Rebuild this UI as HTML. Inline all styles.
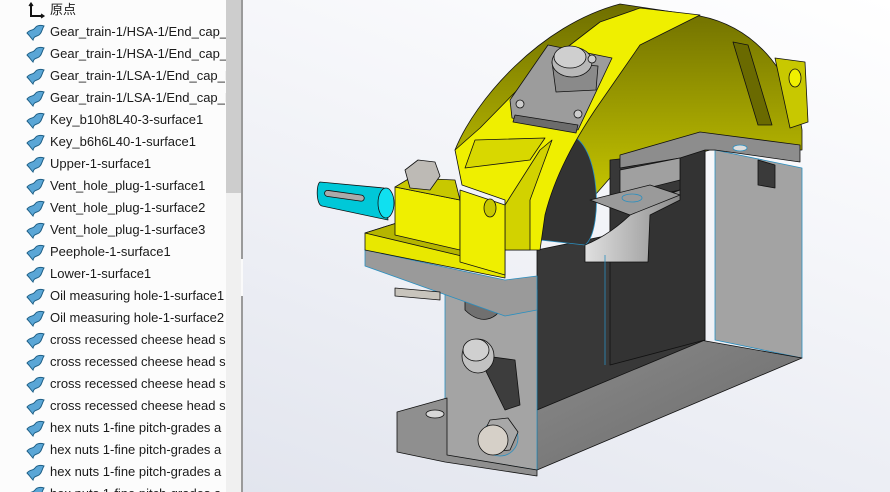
<!DOCTYPE html>
<html><head><meta charset="utf-8"><style>
*{margin:0;padding:0;box-sizing:border-box}
body{width:890px;height:492px;overflow:hidden;position:relative;background:#fff;font-family:"Liberation Sans","Noto Sans CJK SC",sans-serif}
#side{position:absolute;left:0;top:0;width:226px;height:492px;background:#fcfcfc;overflow:hidden}
.row{position:absolute;left:0;height:22px;white-space:nowrap;font-size:13px;color:#1a1a1a;line-height:22px}
.row span{position:absolute;left:50px;top:0}
.row svg{position:absolute;left:26px;top:3px}
#sb{position:absolute;left:226px;top:0;width:15px;height:492px;background:#f0f0f0}
#th{position:absolute;left:226px;top:0;width:15px;height:193px;background:#cdcdcd}
#ln{position:absolute;left:241px;top:0;width:2px;height:492px;background:#9a9a9a}
#tab{position:absolute;left:241px;top:258px;width:9px;height:39px;background:#fafafa;border:1px solid #9a9a9a;border-left:none}
#tab i{position:absolute;left:2px;top:15px;width:5px;height:5px;border-radius:50%;background:#b0b0b0}
#gfx{position:absolute;left:243px;top:0;width:647px;height:492px;background:linear-gradient(200deg,#ffffff 0%,#f4f5f9 40%,#e2e5ee 100%)}
</style></head><body>
<div id="side">
<div class="row" style="top:-1px"><svg width="20" height="18" viewBox="0 0 20 18"><path d="M5 2 V14 H17" stroke="#111" stroke-width="2" fill="none"/><path d="M3 4 L5 1 L7 4 M15 12 L18 14 L15 16" stroke="#111" stroke-width="1.2" fill="none"/></svg><span>原点</span></div>
<div class="row" style="top:21px"><svg width="20" height="18" viewBox="0 0 20 18"><path d="M1 9 C4 5 7 7 9 4 C11 1 15 1 18 2 C16 5 16 8 14 10 C12 13 8 11 7 16 C5 14 3 11 1 9 Z" fill="#5aa6d6" stroke="#1e5f86" stroke-width="1"/></svg><span>Gear_train-1/HSA-1/End_cap_H</span></div>
<div class="row" style="top:43px"><svg width="20" height="18" viewBox="0 0 20 18"><path d="M1 9 C4 5 7 7 9 4 C11 1 15 1 18 2 C16 5 16 8 14 10 C12 13 8 11 7 16 C5 14 3 11 1 9 Z" fill="#5aa6d6" stroke="#1e5f86" stroke-width="1"/></svg><span>Gear_train-1/HSA-1/End_cap_H</span></div>
<div class="row" style="top:65px"><svg width="20" height="18" viewBox="0 0 20 18"><path d="M1 9 C4 5 7 7 9 4 C11 1 15 1 18 2 C16 5 16 8 14 10 C12 13 8 11 7 16 C5 14 3 11 1 9 Z" fill="#5aa6d6" stroke="#1e5f86" stroke-width="1"/></svg><span>Gear_train-1/LSA-1/End_cap_L</span></div>
<div class="row" style="top:87px"><svg width="20" height="18" viewBox="0 0 20 18"><path d="M1 9 C4 5 7 7 9 4 C11 1 15 1 18 2 C16 5 16 8 14 10 C12 13 8 11 7 16 C5 14 3 11 1 9 Z" fill="#5aa6d6" stroke="#1e5f86" stroke-width="1"/></svg><span>Gear_train-1/LSA-1/End_cap_L</span></div>
<div class="row" style="top:109px"><svg width="20" height="18" viewBox="0 0 20 18"><path d="M1 9 C4 5 7 7 9 4 C11 1 15 1 18 2 C16 5 16 8 14 10 C12 13 8 11 7 16 C5 14 3 11 1 9 Z" fill="#5aa6d6" stroke="#1e5f86" stroke-width="1"/></svg><span>Key_b10h8L40-3-surface1</span></div>
<div class="row" style="top:131px"><svg width="20" height="18" viewBox="0 0 20 18"><path d="M1 9 C4 5 7 7 9 4 C11 1 15 1 18 2 C16 5 16 8 14 10 C12 13 8 11 7 16 C5 14 3 11 1 9 Z" fill="#5aa6d6" stroke="#1e5f86" stroke-width="1"/></svg><span>Key_b6h6L40-1-surface1</span></div>
<div class="row" style="top:153px"><svg width="20" height="18" viewBox="0 0 20 18"><path d="M1 9 C4 5 7 7 9 4 C11 1 15 1 18 2 C16 5 16 8 14 10 C12 13 8 11 7 16 C5 14 3 11 1 9 Z" fill="#5aa6d6" stroke="#1e5f86" stroke-width="1"/></svg><span>Upper-1-surface1</span></div>
<div class="row" style="top:175px"><svg width="20" height="18" viewBox="0 0 20 18"><path d="M1 9 C4 5 7 7 9 4 C11 1 15 1 18 2 C16 5 16 8 14 10 C12 13 8 11 7 16 C5 14 3 11 1 9 Z" fill="#5aa6d6" stroke="#1e5f86" stroke-width="1"/></svg><span>Vent_hole_plug-1-surface1</span></div>
<div class="row" style="top:197px"><svg width="20" height="18" viewBox="0 0 20 18"><path d="M1 9 C4 5 7 7 9 4 C11 1 15 1 18 2 C16 5 16 8 14 10 C12 13 8 11 7 16 C5 14 3 11 1 9 Z" fill="#5aa6d6" stroke="#1e5f86" stroke-width="1"/></svg><span>Vent_hole_plug-1-surface2</span></div>
<div class="row" style="top:219px"><svg width="20" height="18" viewBox="0 0 20 18"><path d="M1 9 C4 5 7 7 9 4 C11 1 15 1 18 2 C16 5 16 8 14 10 C12 13 8 11 7 16 C5 14 3 11 1 9 Z" fill="#5aa6d6" stroke="#1e5f86" stroke-width="1"/></svg><span>Vent_hole_plug-1-surface3</span></div>
<div class="row" style="top:241px"><svg width="20" height="18" viewBox="0 0 20 18"><path d="M1 9 C4 5 7 7 9 4 C11 1 15 1 18 2 C16 5 16 8 14 10 C12 13 8 11 7 16 C5 14 3 11 1 9 Z" fill="#5aa6d6" stroke="#1e5f86" stroke-width="1"/></svg><span>Peephole-1-surface1</span></div>
<div class="row" style="top:263px"><svg width="20" height="18" viewBox="0 0 20 18"><path d="M1 9 C4 5 7 7 9 4 C11 1 15 1 18 2 C16 5 16 8 14 10 C12 13 8 11 7 16 C5 14 3 11 1 9 Z" fill="#5aa6d6" stroke="#1e5f86" stroke-width="1"/></svg><span>Lower-1-surface1</span></div>
<div class="row" style="top:285px"><svg width="20" height="18" viewBox="0 0 20 18"><path d="M1 9 C4 5 7 7 9 4 C11 1 15 1 18 2 C16 5 16 8 14 10 C12 13 8 11 7 16 C5 14 3 11 1 9 Z" fill="#5aa6d6" stroke="#1e5f86" stroke-width="1"/></svg><span>Oil measuring hole-1-surface1</span></div>
<div class="row" style="top:307px"><svg width="20" height="18" viewBox="0 0 20 18"><path d="M1 9 C4 5 7 7 9 4 C11 1 15 1 18 2 C16 5 16 8 14 10 C12 13 8 11 7 16 C5 14 3 11 1 9 Z" fill="#5aa6d6" stroke="#1e5f86" stroke-width="1"/></svg><span>Oil measuring hole-1-surface2</span></div>
<div class="row" style="top:329px"><svg width="20" height="18" viewBox="0 0 20 18"><path d="M1 9 C4 5 7 7 9 4 C11 1 15 1 18 2 C16 5 16 8 14 10 C12 13 8 11 7 16 C5 14 3 11 1 9 Z" fill="#5aa6d6" stroke="#1e5f86" stroke-width="1"/></svg><span>cross recessed cheese head s</span></div>
<div class="row" style="top:351px"><svg width="20" height="18" viewBox="0 0 20 18"><path d="M1 9 C4 5 7 7 9 4 C11 1 15 1 18 2 C16 5 16 8 14 10 C12 13 8 11 7 16 C5 14 3 11 1 9 Z" fill="#5aa6d6" stroke="#1e5f86" stroke-width="1"/></svg><span>cross recessed cheese head s</span></div>
<div class="row" style="top:373px"><svg width="20" height="18" viewBox="0 0 20 18"><path d="M1 9 C4 5 7 7 9 4 C11 1 15 1 18 2 C16 5 16 8 14 10 C12 13 8 11 7 16 C5 14 3 11 1 9 Z" fill="#5aa6d6" stroke="#1e5f86" stroke-width="1"/></svg><span>cross recessed cheese head s</span></div>
<div class="row" style="top:395px"><svg width="20" height="18" viewBox="0 0 20 18"><path d="M1 9 C4 5 7 7 9 4 C11 1 15 1 18 2 C16 5 16 8 14 10 C12 13 8 11 7 16 C5 14 3 11 1 9 Z" fill="#5aa6d6" stroke="#1e5f86" stroke-width="1"/></svg><span>cross recessed cheese head s</span></div>
<div class="row" style="top:417px"><svg width="20" height="18" viewBox="0 0 20 18"><path d="M1 9 C4 5 7 7 9 4 C11 1 15 1 18 2 C16 5 16 8 14 10 C12 13 8 11 7 16 C5 14 3 11 1 9 Z" fill="#5aa6d6" stroke="#1e5f86" stroke-width="1"/></svg><span>hex nuts 1-fine pitch-grades a</span></div>
<div class="row" style="top:439px"><svg width="20" height="18" viewBox="0 0 20 18"><path d="M1 9 C4 5 7 7 9 4 C11 1 15 1 18 2 C16 5 16 8 14 10 C12 13 8 11 7 16 C5 14 3 11 1 9 Z" fill="#5aa6d6" stroke="#1e5f86" stroke-width="1"/></svg><span>hex nuts 1-fine pitch-grades a</span></div>
<div class="row" style="top:461px"><svg width="20" height="18" viewBox="0 0 20 18"><path d="M1 9 C4 5 7 7 9 4 C11 1 15 1 18 2 C16 5 16 8 14 10 C12 13 8 11 7 16 C5 14 3 11 1 9 Z" fill="#5aa6d6" stroke="#1e5f86" stroke-width="1"/></svg><span>hex nuts 1-fine pitch-grades a</span></div>
<div class="row" style="top:483px"><svg width="20" height="18" viewBox="0 0 20 18"><path d="M1 9 C4 5 7 7 9 4 C11 1 15 1 18 2 C16 5 16 8 14 10 C12 13 8 11 7 16 C5 14 3 11 1 9 Z" fill="#5aa6d6" stroke="#1e5f86" stroke-width="1"/></svg><span>hex nuts 1-fine pitch-grades a</span></div>
</div>
<div id="sb"></div><div id="th"></div><div id="ln"></div><div id="tab"><i></i></div>
<div id="gfx"></div>
<svg style="position:absolute;left:0;top:0" width="890" height="492" viewBox="0 0 890 492">
<defs>
<linearGradient id="ol" x1="0" y1="0" x2="0" y2="1"><stop offset="0" stop-color="#6e6e00"/><stop offset="1" stop-color="#d6d600"/></linearGradient>
<linearGradient id="fl" x1="0" y1="0" x2="1" y2="1"><stop offset="0" stop-color="#8a8a8a"/><stop offset="1" stop-color="#6a6a6a"/></linearGradient>
<linearGradient id="sd" x1="0" y1="0" x2="1" y2="0"><stop offset="0" stop-color="#e0e0e0"/><stop offset="1" stop-color="#8a8a8a"/></linearGradient>
</defs>
<g stroke="#111" stroke-width="0.8" stroke-linejoin="round">
<path d="M455,150 C475,100 540,25 620,4 L700,16 C760,28 795,80 802,130 L802,150 L710,150 L610,178 L560,235 Z" fill="url(#ol)"/>
<path d="M775,58 L805,62 L808,122 L790,128 Z" fill="#c8c800"/>
<ellipse cx="795" cy="78" rx="6" ry="9" fill="#f0f000"/>
<path d="M733,42 L748,45 L772,125 L758,125 Z" fill="#6a6a00"/>
<path d="M715,150 L802,168 L802,358 L715,340 Z" fill="#a3a3a3" stroke="#2a8fc0"/>
<path d="M537,402 L700,340 L802,358 L537,470 Z" fill="url(#fl)"/>
<path d="M537,250 L610,235 L610,160 L705,150 L705,340 L537,410 Z" fill="#383838"/>
<path d="M610,205 L680,190 L680,155 L705,150 L705,340 L610,365 Z" fill="#333"/>
<path d="M620,155 L700,132 L800,145 L800,162 L715,150 L705,150 L680,158 L620,168 Z" fill="#8d8d8d"/>
<path d="M620,170 L680,158 L680,180 L620,195 Z" fill="#a0a0a0"/>
<ellipse cx="740" cy="148" rx="7" ry="3" fill="#ddd" stroke="#2a8fc0"/>
<path d="M758,160 L775,165 L775,188 L758,185 Z" fill="#3a3a3a"/>
<!-- bearing -->
<path d="M560,135 C600,125 605,230 585,245 L540,240 Z" fill="#333" stroke="#2a8fc0"/>
<path d="M585,245 C610,235 628,218 640,205 L680,190 L680,200 L650,215 L648,262 L585,262 Z" fill="url(#sd)"/>
<path d="M590,200 L650,185 L680,195 L630,215 Z" fill="#9a9a9a"/>
<ellipse cx="632" cy="198" rx="10" ry="4" fill="none" stroke="#2a8fc0"/>
<path d="M605,255 L605,365" stroke="#2a8fc0"/>
<!-- left column -->
<path d="M445,295 L537,290 L537,470 L445,455 Z" fill="#a4a4a4" stroke="#2a8fc0"/>
<path d="M397,412 L447,398 L447,455 L537,470 L537,476 L445,462 L397,452 Z" fill="#8f8f8f"/>
<ellipse cx="435" cy="414" rx="9" ry="4" fill="#d8d8d8"/>
<path d="M465,290 L465,310 C480,325 498,322 505,300 Z" fill="#707070"/>
<path d="M478,355 L515,360 L520,405 L505,410 Z" fill="#3d3d3d"/>
<ellipse cx="478" cy="356" rx="16" ry="17" fill="#c2c2c2"/>
<ellipse cx="476" cy="350" rx="13" ry="11" fill="#d0d0d0"/>
<circle cx="500" cy="438" r="18" fill="#9a9a9a" stroke="#2a8fc0"/>
<path d="M482,436 L490,420 L508,418 L518,432 L510,450 L490,452 Z" fill="#a8a8a8"/>
<circle cx="493" cy="440" r="15" fill="#d6d0c8"/>
<path d="M365,250 L505,280 L537,276 L537,310 L505,316 L365,266 Z" fill="#9a9a9a" stroke="#2a8fc0"/>
<path d="M395,288 L440,292 L440,300 L395,296 Z" fill="#c8c4bc"/>
<path d="M365,233 L400,222 L505,250 L505,278 L365,250 Z" fill="#e8e800"/>
<path d="M365,233 L400,222 L505,250 L470,258 Z" fill="#b5b500"/>
<ellipse cx="440" cy="236" rx="6" ry="4" fill="#999"/>
<path d="M320,182 L384,188 L388,220 L322,206 C316,205 316,184 320,182 Z" fill="#00c8d8"/>
<ellipse cx="386" cy="203" rx="8" ry="15" fill="#10e0f0"/>
<rect x="325" y="190" width="40" height="6" rx="3" transform="rotate(8 325 190)" fill="#aaa"/>
<path d="M395,187 L460,200 L460,250 L395,235 Z" fill="#efef00"/>
<path d="M395,187 L410,178 L455,180 L460,200 Z" fill="#c8c800"/>
<path d="M405,170 L418,160 L435,162 L440,176 L430,190 L410,188 Z" fill="#bdbab5"/>
<!-- arm bright -->
<path d="M455,150 L480,128 L535,72 L600,22 L640,8 L700,15 L640,45 L595,110 C575,140 555,175 545,215 L540,250 L505,250 L505,200 L462,185 Z" fill="#efef00"/>
<path d="M465,168 L530,160 L545,138 L475,140 Z" fill="#d8d800"/>
<path d="M505,205 L540,150 L552,140 L530,200 L530,250 L505,250 Z" fill="#d2d200"/>
<path d="M460,190 L505,205 L505,275 L460,262 Z" fill="#efef00"/>
<ellipse cx="490" cy="208" rx="6" ry="9" fill="#c8c800"/>
<path d="M510,100 L548,45 L612,58 L578,130 L512,118 Z" fill="#9c9c9c"/>
<path d="M515,115 L578,125 L576,133 L513,122 Z" fill="#6c6c6c"/>
<path d="M552,62 L598,66 L596,90 L556,92 Z" fill="#8a8a8a"/>
<ellipse cx="572" cy="62" rx="20" ry="15" fill="#b8b8b8"/>
<ellipse cx="570" cy="57" rx="16" ry="11" fill="#cfcfcf"/>
<circle cx="520" cy="104" r="4" fill="#ccc"/>
<circle cx="578" cy="114" r="4" fill="#ccc"/>
<circle cx="592" cy="59" r="4" fill="#ccc"/>
</g>
</svg>
</body></html>
